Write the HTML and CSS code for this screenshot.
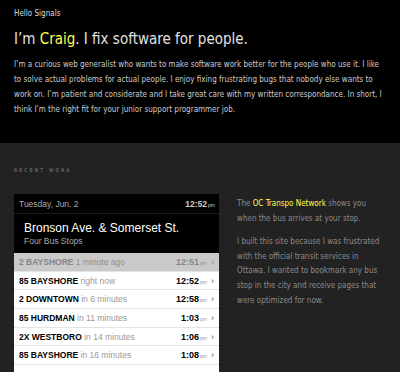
FILE: index.html
```html
<!DOCTYPE html>
<html lang="en">
<head>
  <meta charset="UTF-8">
  <title>Hello Signals</title>
  <link rel="stylesheet" href="styles.css">
</head>
<body>
  <header class="intro">
    <p class="site">Hello Signals</p>
    <h1>I&rsquo;m <span class="hl">Craig</span>. I fix software for people.</h1>
    <p class="lead">I&rsquo;m a curious web generalist who wants to make software work better for the people who use it. I like to solve actual problems for actual people. I enjoy fixing frustrating bugs that nobody else wants to work on. I&rsquo;m patient and considerate and I take great care with my written correspondance. In short, I think I&rsquo;m the right fit for your junior support programmer job.</p>
  </header>
  <section class="work">
    <h2>Recent Work</h2>
    <div class="project">
      <div class="phone">
        <div class="phone-bar">
          <span>Tuesday, Jun. 2</span>
          <span class="clock">12:52<small>pm</small></span>
        </div>
        <div class="stop">
          <div class="stop-name">Bronson Ave. &amp; Somerset St.</div>
          <div class="stop-sub">Four Bus Stops</div>
        </div>
        <ul class="arrivals">
          <li class="past"><span><b>2 BAYSHORE</b> 1 minute ago</span><span class="at"><b>12:51</b><small>pm</small><i>&rsaquo;</i></span></li>
          <li><span><b>85 BAYSHORE</b> right now</span><span class="at"><b>12:52</b><small>pm</small><i>&rsaquo;</i></span></li>
          <li><span><b>2 DOWNTOWN</b> in 6 minutes</span><span class="at"><b>12:58</b><small>pm</small><i>&rsaquo;</i></span></li>
          <li><span><b>85 HURDMAN</b> in 11 minutes</span><span class="at"><b>1:03</b><small>pm</small><i>&rsaquo;</i></span></li>
          <li><span><b>2X WESTBORO</b> in 14 minutes</span><span class="at"><b>1:06</b><small>pm</small><i>&rsaquo;</i></span></li>
          <li><span><b>85 BAYSHORE</b> in 16 minutes</span><span class="at"><b>1:08</b><small>pm</small><i>&rsaquo;</i></span></li>
          <li class="blank"></li>
        </ul>
      </div>
      <div class="desc">
        <p>The <span class="hl">OC Transpo Network</span> shows you when the bus arrives at your stop.</p>
        <p>I built this site because I was frustrated with the official transit services in Ottawa. I wanted to bookmark any bus stop in the city and receive pages that were optimized for now.</p>
      </div>
    </div>
  </section>
</body>
</html>
```

FILE: styles.css
```css
body { margin: 0; background: #222; font-family: "DejaVu Sans Condensed", "DejaVu Sans", sans-serif; font-stretch: condensed; }
.hl { color: #ffff4d; }

.intro { background: #000; color: #ddd; padding: 9px 14px 26.5px; }
.site { margin: 0; font-size: 8px; line-height: 10px; color: #ddd; }
.intro h1 { margin: 11px 0 8.5px; font-size: 15px; line-height: 18px; font-weight: normal; color: #e2e2e2; }
.lead { margin: 0; font-size: 8px; line-height: 15px; color: #ccc; }

.work { padding: 24px 14px 0; }
.work h2 { margin: 0 0 21px; font-size: 5px; line-height: 6px; font-weight: normal; letter-spacing: 2.2px; text-transform: uppercase; color: #888; }
.project { display: flex; gap: 18px; }

.phone { width: 205px; flex: none; background: #000; font-family: "Liberation Sans", Arial, sans-serif; }
.phone-bar { display: flex; justify-content: space-between; align-items: baseline; padding: 5px 4px 4px 5px; font-size: 8.5px; color: #aaa; border-bottom: 1px solid #1c1c1c; }
.clock { font-weight: bold; font-size: 8.5px; color: #ccc; }
.clock small, .at small { font-size: 5px; font-weight: normal; margin-left: 1px; }
.stop { padding: 7px 10px 7px; }
.stop-name { font-size: 12px; color: #fff; }
.stop-sub { font-size: 8.5px; color: #aaa; margin-top: 1px; }

.arrivals { list-style: none; margin: 0; padding: 0; background: #fff; }
.arrivals li { display: flex; justify-content: space-between; align-items: baseline; height: 18.7px; line-height: 18.7px; padding: 0 5px; box-sizing: border-box; border-bottom: 1px solid #e4e4e4; font-size: 8.5px; color: #999; }
.arrivals li b { color: #000; }
.arrivals li.past { background: #c9c9c9; color: #8f8f8f; }
.arrivals li.past b { color: #858585; }
.at b { font-size: 9px; }
.at i { font-style: normal; color: #666; font-size: 9px; margin-left: 4px; }
.past .at i { color: #888; }

.desc { color: #8a8a8a; font-size: 8px; line-height: 14.6px; padding-top: 3px; }
.desc p { margin: 0 0 9px; }
```
